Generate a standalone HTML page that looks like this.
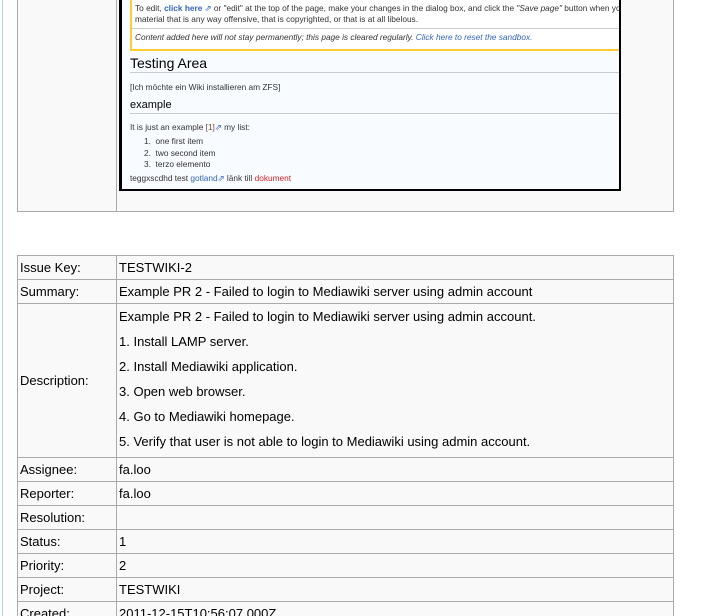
<!DOCTYPE html>
<html><head><meta charset="utf-8"><style>
html,body{margin:0;width:721px;height:616px;overflow:hidden;}
body{background:#fff;position:relative;font-family:"Liberation Sans",Arial,sans-serif;}
.bl{position:absolute;left:2px;top:0;width:1px;height:616px;background:#a7d7f9;}
.t1{position:absolute;left:17px;top:-2px;width:655px;height:212px;border:1px solid #aaa;background:#f9f9f9;}
.t1 .div{position:absolute;left:98px;top:0;width:1px;height:212px;background:#aaa;}
.img{position:absolute;left:119px;top:-3px;width:497px;height:190px;border:2px solid #000;border-left-width:3px;background:#f8fbff;font-size:8.3px;color:#333;overflow:hidden;}
.img .y{position:absolute;left:8px;top:0;width:489px;height:50px;border:2px solid #fc3;border-right:none;border-top:none;background:#fff;}
.img .y .sep{position:absolute;left:0;right:0;top:29px;height:1px;background:#ccc;}
.img p{position:absolute;margin:0;white-space:nowrap;}
a{color:#3366bb;text-decoration:none}
.h{position:absolute;left:8px;right:0;height:1px;background:#c8ccd1;}
table{position:absolute;left:17px;top:255px;border-collapse:collapse;font-size:13px;color:#000;}
td{border:1px solid #aaa;background:#f9f9f9;padding:0 2px;height:23px;vertical-align:middle;}
td.k{width:94px}
td.v{width:552px}
.d{padding-bottom:3px}
.d div{height:25px;line-height:25px}
</style></head><body>
<div class="bl"></div>
<div class="t1"><div class="div"></div></div>
<div class="img">
 <div class="y">
  <p style="left:3px;top:4px">To edit, <a><b>click here</b> ⇗</a> or "edit" at the top of the page, make your changes in the dialog box, and click the <i>"Save page"</i> button when you are finished</p>
  <p style="left:3px;top:15px">material that is any way offensive, that is copyrighted, or that is at all libelous.</p>
  <div class="sep"></div>
  <p style="left:3px;top:33px"><i>Content added here will not stay permanently; this page is cleared regularly. <a>Click here to reset the sandbox.</a></i></p>
 </div>
 <p style="left:8px;top:56px;font-size:14px;color:#000">Testing Area</p>
 <div class="h" style="top:73px"></div>
 <p style="left:8px;top:83px">[Ich möchte ein Wiki installieren am ZFS]</p>
 <p style="left:8px;top:100px;font-size:11px;color:#000">example</p>
 <div class="h" style="top:114px"></div>
 <p style="left:8px;top:123px">It is just an example <a style="color:#743">[1]</a><a>⇗</a> my list:</p>
 <p style="left:22px;top:137px">1.&nbsp; one first item</p>
 <p style="left:22px;top:149px">2.&nbsp; two second item</p>
 <p style="left:22px;top:160px">3.&nbsp; terzo elemento</p>
 <p style="left:8px;top:174px">teggxscdhd test <a>gotland⇗</a> länk till <span style="color:#d22">dokument</span></p>
</div>
<table>
<tr><td class="k">Issue Key:</td><td class="v">TESTWIKI-2</td></tr>
<tr><td class="k">Summary:</td><td class="v">Example PR 2 - Failed to login to Mediawiki server using admin account</td></tr>
<tr><td class="k" style="height:152px">Description:</td><td class="v d"><div>Example PR 2 - Failed to login to Mediawiki server using admin account.</div><div>1. Install LAMP server.</div><div>2. Install Mediawiki application.</div><div>3. Open web browser.</div><div>4. Go to Mediawiki homepage.</div><div>5. Verify that user is not able to login to Mediawiki using admin account.</div></td></tr>
<tr><td class="k">Assignee:</td><td class="v">fa.loo</td></tr>
<tr><td class="k">Reporter:</td><td class="v">fa.loo</td></tr>
<tr><td class="k">Resolution:</td><td class="v"></td></tr>
<tr><td class="k">Status:</td><td class="v">1</td></tr>
<tr><td class="k">Priority:</td><td class="v">2</td></tr>
<tr><td class="k">Project:</td><td class="v">TESTWIKI</td></tr>
<tr><td class="k">Created:</td><td class="v">2011-12-15T10:56:07.000Z</td></tr>
</table>
</body></html>
